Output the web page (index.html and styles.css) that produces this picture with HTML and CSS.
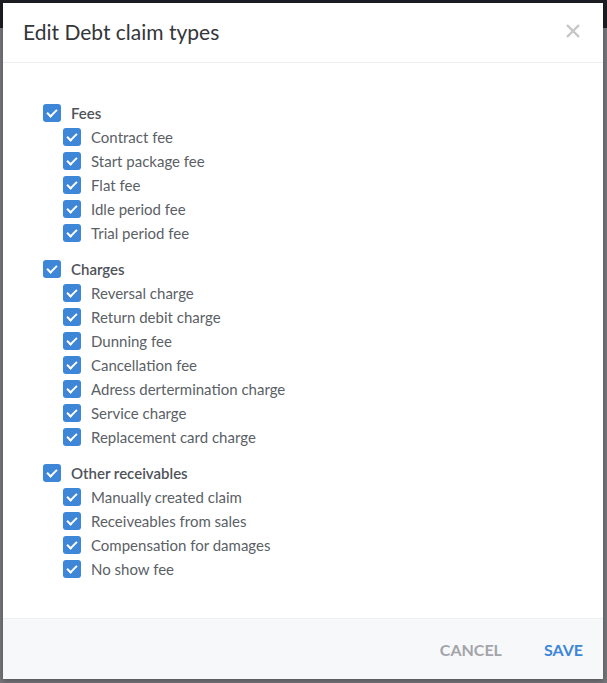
FILE: index.html
```html
<!DOCTYPE html>
<html>
<head>
    <title>Edit Debt claim types</title>
    <link rel="stylesheet" href="styles.css">
</head>
<body>
    <div class="backdrop">
        <div class="topbar"></div>
    </div>
    <div class="modal">
        <div class="modal-header">
            <h2 class="modal-title">Edit Debt claim types</h2>
            <span class="close">
                <svg width="16" height="16" viewBox="0 0 16 16"><path d="M2 2L14 14M14 2L2 14" stroke="#c6c6c6" stroke-width="2.4"/></svg>
            </span>
        </div>
        <div class="modal-body">
            <div class="group">
                <label class="row parent"><span class="box"></span>Fees</label>
                <label class="row child"><span class="box"></span>Contract fee</label>
                <label class="row child"><span class="box"></span>Start package fee</label>
                <label class="row child"><span class="box"></span>Flat fee</label>
                <label class="row child"><span class="box"></span>Idle period fee</label>
                <label class="row child"><span class="box"></span>Trial period fee</label>
            </div>
            <div class="group">
                <label class="row parent"><span class="box"></span>Charges</label>
                <label class="row child"><span class="box"></span>Reversal charge</label>
                <label class="row child"><span class="box"></span>Return debit charge</label>
                <label class="row child"><span class="box"></span>Dunning fee</label>
                <label class="row child"><span class="box"></span>Cancellation fee</label>
                <label class="row child"><span class="box"></span>Adress dertermination charge</label>
                <label class="row child"><span class="box"></span>Service charge</label>
                <label class="row child"><span class="box"></span>Replacement card charge</label>
            </div>
            <div class="group">
                <label class="row parent"><span class="box"></span>Other receivables</label>
                <label class="row child"><span class="box"></span>Manually created claim</label>
                <label class="row child"><span class="box"></span>Receiveables from sales</label>
                <label class="row child"><span class="box"></span>Compensation for damages</label>
                <label class="row child"><span class="box"></span>No show fee</label>
            </div>
        </div>
        <div class="modal-footer">
            <button class="btn cancel">Cancel</button>
            <button class="btn save">Save</button>
        </div>
    </div>
</body>
</html>
```

FILE: styles.css
```css
html, body {
    margin: 0;
    height: 100%;
}

body {
    background: #76767b;
    font-family: Lato, "Open Sans", sans-serif;
    position: relative;
    overflow: hidden;
}

.topbar {
    height: 28px;
    background: #1d1e23;
}

.modal {
    position: absolute;
    left: 3px;
    top: 3px;
    width: 600px;
    height: 676px;
    background: #fff;
    display: flex;
    flex-direction: column;
    box-shadow: 0 2px 6px rgba(0, 0, 0, 0.3);
}

.modal-header {
    height: 59px;
    border-bottom: 1px solid #ededed;
    display: flex;
    align-items: center;
    justify-content: space-between;
    padding: 0 22px 0 20px;
}

.modal-title {
    margin: 0;
    font-size: 21px;
    font-weight: 400;
    color: #33363a;
    padding-bottom: 2px;
}

.close {
    display: flex;
    padding-bottom: 4px;
}

.modal-body {
    flex: 1;
    padding: 38px 40px 0;
}

.group {
    margin-bottom: 12px;
}

.row {
    display: flex;
    align-items: center;
    height: 24px;
    font-size: 15px;
    color: #5b5f66;
}

.parent {
    font-weight: 600;
    color: #4f535a;
}

.child {
    padding-left: 20px;
}

.box {
    width: 18px;
    height: 18px;
    border-radius: 3px;
    background: #3d86d8;
    margin-right: 10px;
    position: relative;
}

.box::after {
    content: '';
    position: absolute;
    left: 6px;
    top: 3px;
    width: 4px;
    height: 8px;
    border: solid #fff;
    border-width: 0 2px 2px 0;
    transform: rotate(45deg);
}

.modal-footer {
    height: 60px;
    background: #f7f8fa;
    border-top: 1px solid #eeeff1;
    display: flex;
    justify-content: flex-end;
    align-items: center;
    padding-right: 20px;
}

.btn {
    background: none;
    border: none;
    font-family: Lato, sans-serif;
    font-size: 16px;
    font-weight: 700;
    text-transform: uppercase;
    padding: 0;
    margin-left: 42px;
}

.cancel {
    color: #a3a5a8;
}

.save {
    color: #3d86d8;
}
```
